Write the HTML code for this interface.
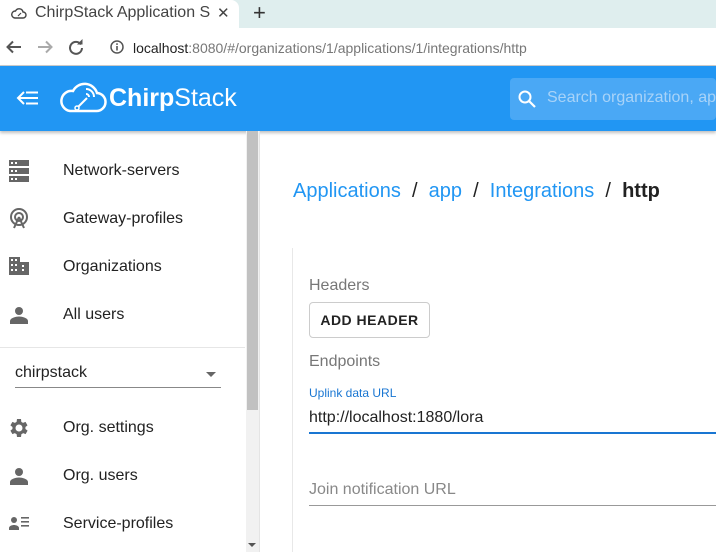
<!DOCTYPE html>
<html><head><style>
*{margin:0;padding:0;box-sizing:border-box}
body{width:716px;height:552px;overflow:hidden;font-family:"Liberation Sans",sans-serif;background:#fff;position:relative}
.abs{position:absolute}
.tabbar{left:0;top:0;width:716px;height:28px;background:#dfeeee}
.tab{left:0;top:0;width:239px;height:28px;background:#fff;border-top-right-radius:8px}
.addr{left:0;top:28px;width:716px;height:38px;background:#fff;border-bottom:1px solid #ccc}
.hdr{left:0;top:66px;width:716px;height:65px;background:#2196f3;box-shadow:0 2px 3px rgba(0,0,0,.25)}
.nav{font-size:16px;color:#222}
.ico{fill:#666}
</style></head><body>
<div class="abs tabbar"></div>
<div class="abs tab"></div>
<svg class="abs" style="left:11px;top:6px" width="16" height="14" viewBox="0 0 16 14"><path d="M4 12h8a3 3 0 0 0 0-6 4 4 0 0 0-7.5-1A3.5 3.5 0 0 0 4 12z" fill="none" stroke="#444" stroke-width="1.4"/><path d="M7 10l3-3" stroke="#444" stroke-width="1.2"/></svg>
<div class="abs" style="left:35px;top:4px;font-size:16px;color:#444">ChirpStack Application S</div>
<div class="abs" style="left:217px;top:4px;font-size:15px;color:#444">✕</div>
<div class="abs" style="left:253px;top:0px;font-size:22px;color:#333">+</div>
<div class="abs addr"></div>
<svg class="abs" style="left:6px;top:40px" width="16" height="14"><path d="M15 7H2M7 1.5L1.5 7 7 12.5" fill="none" stroke="#555" stroke-width="2"/></svg>
<svg class="abs" style="left:37px;top:40px" width="16" height="14"><path d="M1 7h13M9 1.5L14.5 7 9 12.5" fill="none" stroke="#aaa" stroke-width="2"/></svg>
<svg class="abs" style="left:68px;top:39px" width="16" height="16" viewBox="0 0 16 16"><path d="M13 5.5A6 6 0 1 0 14 9" fill="none" stroke="#555" stroke-width="2"/><path d="M9 5.5h5.5V0z" fill="#555"/></svg>
<svg class="abs" style="left:110px;top:40px" width="14" height="14"><circle cx="7" cy="7" r="6" fill="none" stroke="#555" stroke-width="1.5"/><rect x="6.2" y="6" width="1.6" height="4.5" fill="#555"/><rect x="6.2" y="3.3" width="1.6" height="1.6" fill="#555"/></svg>
<div class="abs" style="left:133px;top:40px;font-size:14px;color:#777"><span style="color:#222">localhost</span>:8080/#/organizations/1/applications/1/integrations/http</div>
<div class="abs hdr"></div>
<svg class="abs" style="left:16px;top:91px" width="22" height="14"><path d="M8 1L2 7l6 6M2 7h20M10 1.5h12M10 12.5h12" fill="none" stroke="#fff" stroke-width="2"/></svg>
<svg class="abs" style="left:60px;top:80px" width="48" height="34" viewBox="0 0 48 34"><path d="M10 31h26a9 9 0 0 0 1-18 13 13 0 0 0-24-2A10 10 0 0 0 10 31z" fill="none" stroke="#fff" stroke-width="2.5"/><path d="M26 9a8 8 0 0 1 8 8M26 14a3 3 0 0 1 3 3" fill="none" stroke="#fff" stroke-width="2"/><path d="M27 18l-9 9" stroke="#fff" stroke-width="2"/><circle cx="17" cy="28" r="2" fill="none" stroke="#fff" stroke-width="1.5"/></svg>
<div class="abs" style="left:109px;top:84px;font-size:25px;color:#fff"><b>Chirp</b>Stack</div>
<div class="abs" style="left:510px;top:78px;width:206px;height:42px;background:#4aa8f5;border-radius:4px"></div>
<svg class="abs" style="left:517px;top:89px" width="20" height="20"><circle cx="8" cy="8" r="5.5" fill="none" stroke="#fff" stroke-width="2"/><path d="M12 12l6 6" stroke="#fff" stroke-width="2.2"/></svg>
<div class="abs" style="left:547px;top:89px;font-size:16px;color:#a8d3f8;white-space:nowrap">Search organization, app</div>
<!-- sidebar -->
<div class="abs" style="left:246px;top:131px;width:13px;height:421px;background:#f1f1f1"></div>
<div class="abs" style="left:247px;top:131px;width:11px;height:279px;background:#c1c1c1"></div>
<div class="abs" style="left:259px;top:131px;width:1px;height:421px;background:#e4e4e4"></div>
<div class="abs" style="left:248px;top:543px;width:0;height:0;border-left:4px solid transparent;border-right:4px solid transparent;border-top:4px solid #555"></div>
<svg class="abs" style="left:9px;top:160px" width="20" height="22"><rect x="0" y="0" width="20" height="6" fill="#666"/><rect x="0" y="8" width="20" height="6" fill="#666"/><rect x="0" y="16" width="20" height="6" fill="#666"/><rect x="2" y="2" width="2" height="2" fill="#fff"/><rect x="2" y="10" width="2" height="2" fill="#fff"/><rect x="2" y="18" width="2" height="2" fill="#fff"/><rect x="6" y="2" width="2" height="2" fill="#fff"/><rect x="6" y="10" width="2" height="2" fill="#fff"/><rect x="6" y="18" width="2" height="2" fill="#fff"/></svg>
<div class="abs nav" style="left:63px;top:162px">Network-servers</div>
<svg class="abs" style="left:8px;top:207px" width="22" height="22"><circle cx="11" cy="10" r="8" fill="none" stroke="#666" stroke-width="2"/><circle cx="11" cy="10" r="4" fill="none" stroke="#666" stroke-width="2"/><path d="M11 10l-5 11M11 10l5 11" stroke="#666" stroke-width="2"/></svg>
<div class="abs nav" style="left:63px;top:210px">Gateway-profiles</div>
<svg class="abs" style="left:9px;top:257px" width="20" height="18"><rect x="0" y="0" width="11" height="18" fill="#666"/><rect x="11" y="5" width="9" height="13" fill="#666"/><g fill="#fff"><rect x="2" y="2" width="2" height="2"/><rect x="6" y="2" width="2" height="2"/><rect x="2" y="7" width="2" height="2"/><rect x="6" y="7" width="2" height="2"/><rect x="2" y="12" width="2" height="2"/><rect x="6" y="12" width="2" height="2"/><rect x="13" y="8" width="2" height="2"/><rect x="13" y="12" width="2" height="2"/></g></svg>
<div class="abs nav" style="left:63px;top:258px">Organizations</div>
<svg class="abs" style="left:10px;top:306px" width="18" height="18"><circle cx="9" cy="5" r="4" fill="#666"/><path d="M0 18v-3c0-3 6-4.5 9-4.5s9 1.5 9 4.5v3z" fill="#666"/></svg>
<div class="abs nav" style="left:63px;top:306px">All users</div>
<div class="abs" style="left:0;top:347px;width:245px;height:1px;background:#e6e6e6"></div>
<div class="abs nav" style="left:15px;top:364px">chirpstack</div>
<div class="abs" style="left:206px;top:372px;border-left:5px solid transparent;border-right:5px solid transparent;border-top:5px solid #666"></div>
<div class="abs" style="left:15px;top:387px;width:206px;height:1px;background:#888"></div>
<svg class="abs" style="left:7px;top:416px" width="24" height="24" viewBox="0 0 24 24"><path class="ico" d="M19.4 13a7.5 7.5 0 0 0 0-2l2.1-1.6-2-3.5-2.5 1a7.3 7.3 0 0 0-1.7-1L15 3h-4l-.4 2.9a7.3 7.3 0 0 0-1.7 1l-2.5-1-2 3.5L6.5 11a7.5 7.5 0 0 0 0 2l-2.1 1.6 2 3.5 2.5-1c.5.4 1.1.8 1.7 1L11 21h4l.4-2.9c.6-.2 1.2-.6 1.7-1l2.5 1 2-3.5zM13 15.5a3.5 3.5 0 1 1 0-7 3.5 3.5 0 0 1 0 7z" transform="translate(-1 0)"/></svg>
<div class="abs nav" style="left:63px;top:419px">Org. settings</div>
<svg class="abs" style="left:10px;top:467px" width="18" height="18"><circle cx="9" cy="5" r="4" fill="#666"/><path d="M0 18v-3c0-3 6-4.5 9-4.5s9 1.5 9 4.5v3z" fill="#666"/></svg>
<div class="abs nav" style="left:63px;top:467px">Org. users</div>
<svg class="abs" style="left:9px;top:516px" width="22" height="14"><circle cx="5" cy="4" r="3" fill="#666"/><path d="M0 14v-2c0-2 3-3 5-3s5 1 5 3v2z" fill="#666"/><rect x="12" y="1" width="8" height="1.6" fill="#666"/><rect x="12" y="5" width="8" height="1.6" fill="#666"/><rect x="12" y="9" width="8" height="1.6" fill="#666"/></svg>
<div class="abs nav" style="left:63px;top:515px">Service-profiles</div>
<!-- content -->
<div class="abs" style="left:293px;top:180px;font-size:20px;color:#2196f3;white-space:nowrap">Applications <span style="color:#222">&nbsp;/&nbsp;</span> app <span style="color:#222">&nbsp;/&nbsp;</span> Integrations <span style="color:#222">&nbsp;/&nbsp; <b>http</b></span></div>
<div class="abs" style="left:292px;top:248px;width:1px;height:304px;background:#e8e8e8"></div>
<div class="abs" style="left:309px;top:277px;font-size:16px;color:#777">Headers</div>
<div class="abs" style="left:309px;top:302px;width:121px;height:36px;border:1px solid #ccc;border-radius:4px;font-size:14px;font-weight:bold;color:#222;text-align:center;line-height:34px;letter-spacing:.5px">ADD HEADER</div>
<div class="abs" style="left:309px;top:353px;font-size:16px;color:#777">Endpoints</div>
<div class="abs" style="left:309px;top:386px;font-size:12px;color:#1976d2">Uplink data URL</div>
<div class="abs" style="left:309px;top:409px;font-size:16px;color:#222">http://localhost:1880/lora</div>
<div class="abs" style="left:309px;top:432px;width:407px;height:2px;background:#1976d2"></div>
<div class="abs" style="left:309px;top:481px;font-size:16px;color:#888">Join notification URL</div>
<div class="abs" style="left:309px;top:505px;width:407px;height:1px;background:#999"></div>
</body></html>
